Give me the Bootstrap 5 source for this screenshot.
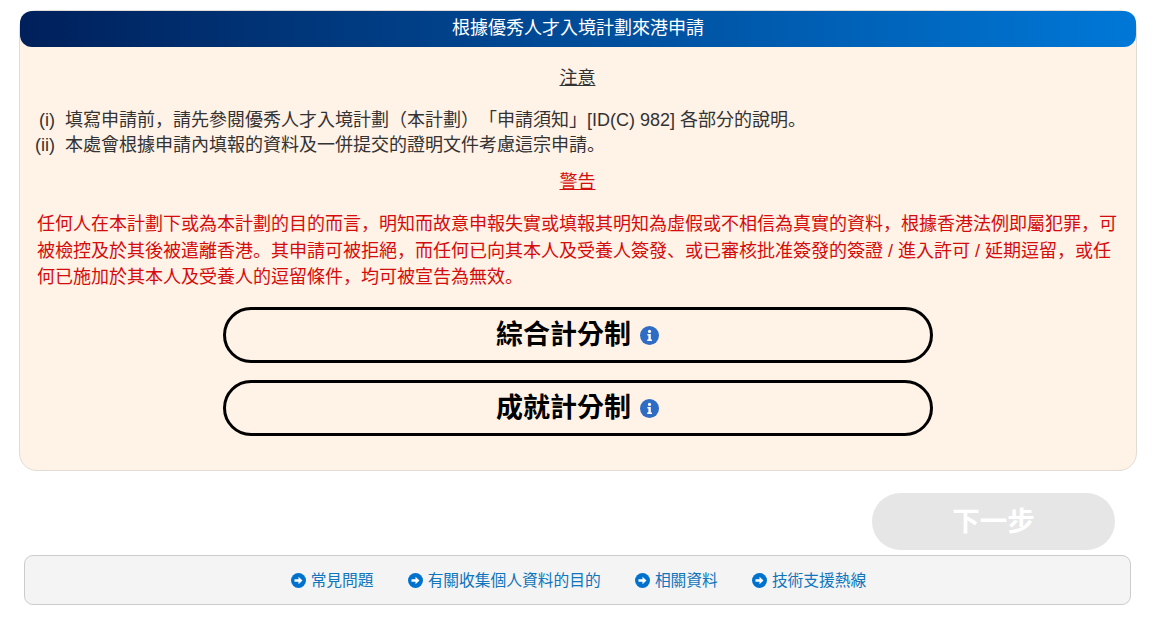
<!DOCTYPE html>
<html lang="zh-Hant">
<head>
<meta charset="utf-8">
<title>根據優秀人才入境計劃來港申請</title>
<link href="https://cdn.jsdelivr.net/npm/bootstrap@5.3.0/dist/css/bootstrap.min.css" rel="stylesheet">
<style>
body{font-family:"Liberation Sans","Noto Sans CJK JP",sans-serif;font-size:18px;color:#333;background:#fff;text-spacing-trim:space-all;font-kerning:none;font-feature-settings:"locl" 0}
.page-wrap{padding:10px 22px 0 19px}
.apply-panel{background:#fff2e7;border:1px solid #e2dcd7;border-radius:18px;height:461px}
.panel-head{height:36px;background:linear-gradient(to right,#00205b,#0078d7);color:#fff;border-radius:12px;line-height:34px;text-align:center}
.panel-body-area{padding:18px 16px 0 15px}
.note-title{line-height:27px;text-align:center;text-decoration:underline;color:#333;margin-bottom:16px}
.note-row{line-height:25px;display:flex}
.note-num{width:30px;flex:none;text-align:right;padding-right:10px;white-space:nowrap}
.warn-title{color:#d40c0c;line-height:27px;text-align:center;text-decoration:underline;margin:11px 0 15px}
.warn-text{color:#d40c0c;line-height:26.5px;padding-left:2px;margin-bottom:16px}
.scheme-btn{display:flex;align-items:center;justify-content:center;gap:9px;width:710px;height:56px;margin:0 auto 17px;background:transparent;border:3.5px solid #000;border-radius:28px;font-size:27px;font-weight:700;color:#000;padding:1px 0 0}
.next-row{display:flex;justify-content:flex-end;padding:22px 22px 0 0}
.next-btn{width:243px;height:57px;border:0;border-radius:29px;background:#e6e6e6;color:#fff;font-size:27.5px;font-weight:700;padding-top:2px}
.foot-bar{margin:5px 6px 0 5px;height:50px;background:#f4f4f4;border:1px solid #ccc;border-radius:9px;font-size:15.75px;gap:34px;padding:1px 0 0 2px}
.foot-link{color:#0f75bc;text-decoration:none;display:inline-flex;align-items:center;gap:5px}
</style>
</head>
<body>
<div class="page-wrap">
  <div class="apply-panel">
    <div class="panel-head">根據優秀人才入境計劃來港申請</div>
    <div class="panel-body-area">
      <div class="note-title">注意</div>
      <div class="note-row"><span class="note-num">(i)</span><span>填寫申請前，請先參閱優秀人才入境計劃（本計劃）「申請須知」[ID(C) 982] 各部分的說明。</span></div>
      <div class="note-row"><span class="note-num">(ii)</span><span>本處會根據申請內填報的資料及一併提交的證明文件考慮這宗申請。</span></div>
      <div class="warn-title">警告</div>
      <div class="warn-text">任何人在本計劃下或為本計劃的目的而言，明知而故意申報失實或填報其明知為虛假或不相信為真實的資料，根據香港法例即屬犯罪，可被檢控及於其後被遣離香港。其申請可被拒絕，而任何已向其本人及受養人簽發、或已審核批准簽發的簽證 / 進入許可 / 延期逗留，或任何已施加於其本人及受養人的逗留條件，均可被宣告為無效。</div>
      <button type="button" class="scheme-btn">綜合計分制
        <svg width="19" height="19" viewBox="0 0 19 19"><circle cx="9.5" cy="9.5" r="9.5" fill="#2f6cc4"/><circle cx="9.5" cy="5.4" r="1.6" fill="#fff"/><path d="M7.4 8h3.4v5.4h1.2v1.5H7.2v-1.5h1.2V9.5h-1z" fill="#fff"/></svg>
      </button>
      <button type="button" class="scheme-btn">成就計分制
        <svg width="19" height="19" viewBox="0 0 19 19"><circle cx="9.5" cy="9.5" r="9.5" fill="#2f6cc4"/><circle cx="9.5" cy="5.4" r="1.6" fill="#fff"/><path d="M7.4 8h3.4v5.4h1.2v1.5H7.2v-1.5h1.2V9.5h-1z" fill="#fff"/></svg>
      </button>
    </div>
  </div>
  <div class="next-row"><button type="button" class="next-btn" disabled>下一步</button></div>
  <div class="foot-bar d-flex justify-content-center align-items-center">
    <a class="foot-link" href="#"><svg width="15" height="15" viewBox="0 0 15 15"><circle cx="7.5" cy="7.5" r="7.5" fill="#0072ce"/><path d="M3.5 6.3h4V3.8l4 3.7-4 3.7V8.7h-4z" fill="#fff"/></svg>常見問題</a>
    <a class="foot-link" href="#"><svg width="15" height="15" viewBox="0 0 15 15"><circle cx="7.5" cy="7.5" r="7.5" fill="#0072ce"/><path d="M3.5 6.3h4V3.8l4 3.7-4 3.7V8.7h-4z" fill="#fff"/></svg>有關收集個人資料的目的</a>
    <a class="foot-link" href="#"><svg width="15" height="15" viewBox="0 0 15 15"><circle cx="7.5" cy="7.5" r="7.5" fill="#0072ce"/><path d="M3.5 6.3h4V3.8l4 3.7-4 3.7V8.7h-4z" fill="#fff"/></svg>相關資料</a>
    <a class="foot-link" href="#"><svg width="15" height="15" viewBox="0 0 15 15"><circle cx="7.5" cy="7.5" r="7.5" fill="#0072ce"/><path d="M3.5 6.3h4V3.8l4 3.7-4 3.7V8.7h-4z" fill="#fff"/></svg>技術支援熱線</a>
  </div>
</div>
<script src="https://cdn.jsdelivr.net/npm/bootstrap@5.3.0/dist/js/bootstrap.bundle.min.js"></script>
</body>
</html>
